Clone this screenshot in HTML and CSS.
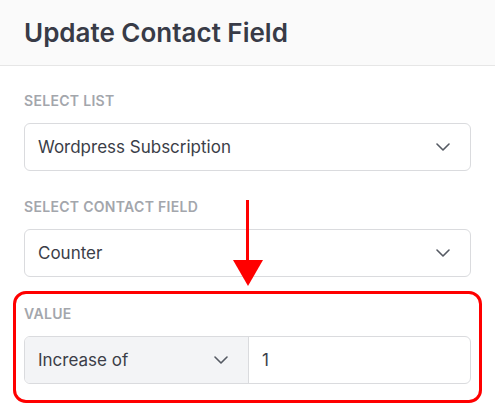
FILE: index.html
```html
<!DOCTYPE html>
<html>
<head>
<meta charset="utf-8">
<link rel="stylesheet" href="styles.css">
</head>
<body>
<div class="panel">
  <div class="header"><h1 class="title">Update Contact Field</h1></div>
  <div class="body">
    <div class="field">
      <div class="label">Select List</div>
      <div class="select">
        <span class="select-text">Wordpress Subscription</span>
        <svg class="chev" width="14" height="8" viewBox="0 0 14 8"><path d="M1 1l6 6 6-6" fill="none" stroke="#555a63" stroke-width="1.6" stroke-linecap="round" stroke-linejoin="round"/></svg>
      </div>
    </div>
    <div class="field">
      <div class="label">Select Contact Field</div>
      <div class="select">
        <span class="select-text">Counter</span>
        <svg class="chev" width="14" height="8" viewBox="0 0 14 8"><path d="M1 1l6 6 6-6" fill="none" stroke="#555a63" stroke-width="1.6" stroke-linecap="round" stroke-linejoin="round"/></svg>
      </div>
    </div>
    <div class="field value-field">
      <div class="label">Value</div>
      <div class="group">
        <div class="group-select">
          <span class="select-text">Increase of</span>
          <svg class="chev" width="14" height="8" viewBox="0 0 14 8"><path d="M1 1l6 6 6-6" fill="none" stroke="#555a63" stroke-width="1.6" stroke-linecap="round" stroke-linejoin="round"/></svg>
        </div>
        <div class="group-input"><span class="select-text">1</span></div>
      </div>
    </div>
  </div>
  <svg class="arrow" width="32" height="88" viewBox="0 0 32 88"><rect x="14" y="0" width="3" height="62" fill="#ff0000"/><polygon points="1,60 31,60 16,86" fill="#ff0000"/></svg>
</div>
</body>
</html>
```

FILE: styles.css
```css
* { box-sizing: border-box; }
html, body { margin: 0; padding: 0; background: #ffffff; }
body { font-family: Inter, "Noto Sans", sans-serif; }
.panel { position: relative; width: 495px; height: 416px; overflow: hidden; }
.header {
  height: 66px;
  background: #fafafa;
  border-bottom: 1px solid #e6e6e6;
  padding: 0 24px;
  display: flex;
  align-items: center;
}
.title {
  margin: 0;
  font-size: 26px;
  font-weight: 600;
  color: #383b47;
  line-height: 30px;
}
.body { padding: 26px 24px 0 24px; display: flex; flex-direction: column; gap: 27px; }
.field { display: flex; flex-direction: column; gap: 14px; }
.label {
  font-size: 14px;
  line-height: 17px;
  font-weight: 600;
  letter-spacing: 0.3px;
  text-transform: uppercase;
  color: #a3a6ac;
}
.select, .group {
  height: 48px;
  border: 1px solid #dadbde;
  border-radius: 6px;
  background: #fff;
  display: flex;
  align-items: center;
}
.select { padding: 0 20px 0 13px; justify-content: space-between; }
.select-text { font-size: 17px; color: #3b3e48; }
.value-field {
  margin: -13px -11px 0 -11px;
  padding: 11px 8px 16px 8px;
  border: 3px solid #ff0000;
  border-radius: 13px;
}
.group { overflow: hidden; }
.group-select {
  width: 224px;
  height: 100%;
  background: #f3f4f6;
  border-right: 1px solid #dadbde;
  display: flex;
  align-items: center;
  justify-content: space-between;
  padding: 0 20px 0 13px;
}
.group-input { flex: 1; padding: 0 13px; display: flex; align-items: center; height: 100%; }
.arrow { position: absolute; left: 232px; top: 200px; }
```
